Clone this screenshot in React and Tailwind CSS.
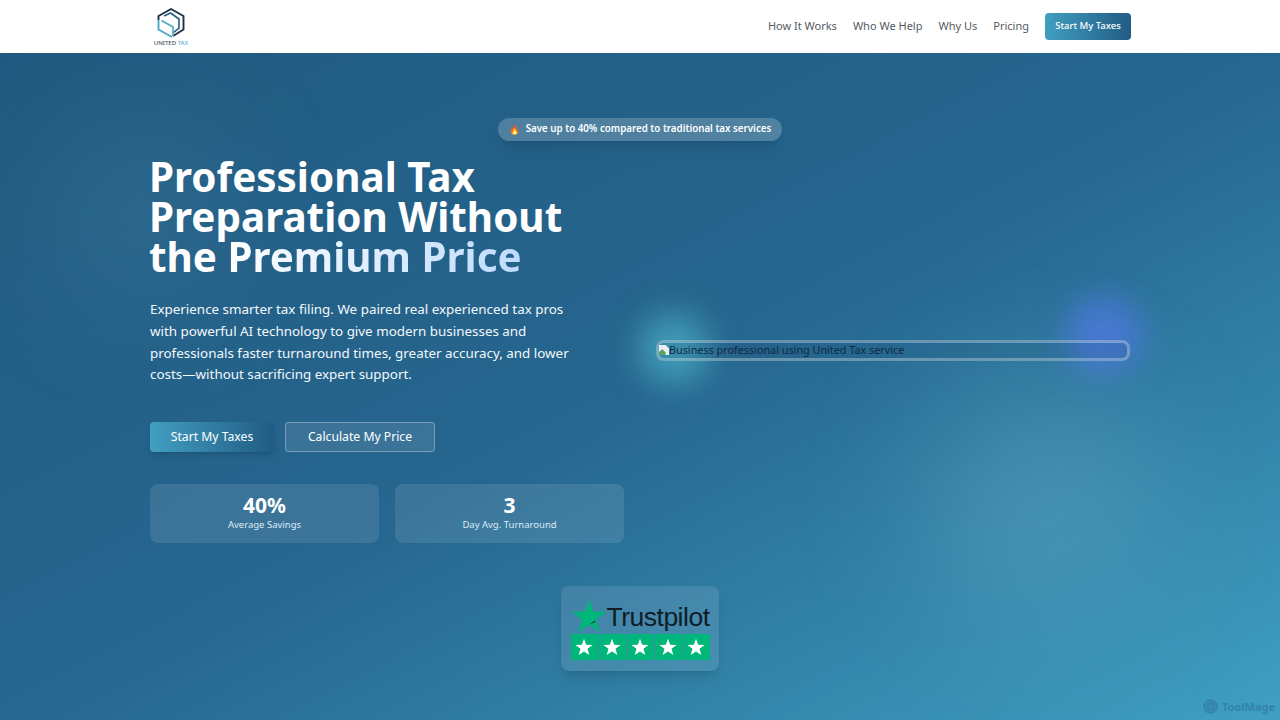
import React from 'react';

const font = "font-['Noto_Sans','Open_Sans',sans-serif]";

const Logo = () => (
    <div className="flex w-[36px] flex-col items-center pt-[2px]">
        <svg width="28" height="30" viewBox="0 0 28 30" fill="none">
            <path d="M1.5 12 V8 L14 1 L26.5 8 V21.5 L16 28" stroke="#1c3147" strokeWidth="1.9" strokeLinejoin="round" fill="none" />
            <path d="M1.5 12 V21.5 L15 29" stroke="#4aa8c8" strokeWidth="1.9" fill="none" />
            <path d="M7 8 L13.5 5 L22 11 V20 L16.5 24.5" stroke="#2c5d80" strokeWidth="1.6" fill="none" />
            <path d="M4.5 12.5 L16 19 V28" stroke="#4aa8c8" strokeWidth="1.6" fill="none" />
        </svg>
        <span className="mt-[1px] whitespace-nowrap text-[6px] leading-[8px] font-medium text-[#44505c]">
            UNITED <span className="text-[#5fb0cf]">TAX</span>
        </span>
    </div>
);

const Star = ({ size, color, notch }) => (
    <svg width={size} height={size} viewBox="0 0 24 24" className="shrink-0">
        <path d="M12 1 L14.9 9 L23.5 9.2 L16.7 14.4 L19.1 22.8 L12 17.9 L4.9 22.8 L7.3 14.4 L0.5 9.2 L9.1 9 Z" fill={color} />
        {notch && <path d="M12 17.9 L15.8 15 L16.4 16 Z" fill="#0b4a38" />}
    </svg>
);

const Stat = ({ value, label }) => (
    <div className="flex h-[59px] flex-col items-center justify-center rounded-lg bg-white/10 pb-[4px]">
        <div className="text-[21px] leading-[26px] font-bold text-white">{value}</div>
        <div className="text-[9.5px] leading-[14px] text-[#dcebf5]">{label}</div>
    </div>
);

const BrokenImage = () => (
    <svg width="10" height="12" viewBox="0 0 12 12" className="shrink-0">
        <path d="M0 0 H8 L12 4 V12 H0 Z" fill="#e8eef3" />
        <path d="M0 8 L4 5 L8 9 V12 H0 Z" fill="#5aa35a" />
    </svg>
);

export default function App() {
    return (
        <div className={`${font} flex h-[720px] flex-col overflow-hidden`}>
            <header className="flex h-[53px] items-center justify-between bg-white pr-[149px] pl-[153px]">
                <Logo />
                <nav className="flex items-center gap-4 text-[11px] text-[#555b61]">
                    <a>How It Works</a>
                    <a>Who We Help</a>
                    <a>Why Us</a>
                    <a>Pricing</a>
                    <a className="flex h-[27px] w-[86px] items-center justify-center rounded bg-gradient-to-r from-[#429fc0] to-[#215c85] text-[9.5px] font-medium text-white">
                        Start My Taxes
                    </a>
                </nav>
            </header>

            <main className="relative flex flex-1 flex-col items-center overflow-hidden bg-gradient-to-br from-[#215a80] via-[#26668f] to-[#3fa0c2] pt-[65px]">
                <div className="absolute top-[260px] left-[638px] h-[72px] w-[72px] rounded-full bg-[#4bb0c8]/70 blur-lg" />
                <div className="absolute top-[244px] left-[1066px] h-[76px] w-[76px] rounded-full bg-[#4a78d8]/90 blur-lg" />
                <div className="absolute top-[340px] left-[930px] h-[220px] w-[220px] rounded-full bg-[#7ab8cc]/30 blur-3xl" />
                <div className="absolute top-[80px] left-[60px] h-[160px] w-[160px] rounded-full bg-[#6aa0b8]/20 blur-3xl" />

                <div className="relative flex h-[23px] w-[284px] items-center justify-center gap-[6px] rounded-full bg-white/20 text-[9.75px] font-semibold text-white shadow-lg">
                    <span className="text-[9px]">🔥</span>
                    Save up to 40% compared to traditional tax services
                </div>

                <section className="relative mt-[16px] grid w-[980px] grid-cols-2 items-center gap-8">
                    <div className="flex flex-col">
                        <h1 className="-ml-[1px] text-[40.4px] leading-[40px] font-bold text-white">
                            Professional Tax Preparation Without the{' '}
                            <span className="bg-gradient-to-r from-white to-[#bfdbfe] bg-clip-text text-transparent">Premium Price</span>
                        </h1>
                        <p className="mt-[22px] max-w-[430px] text-[13.4px] leading-[21.8px] text-[#f3f8fb]">
                            Experience smarter tax filing. We paired real experienced tax pros with powerful AI technology to give modern businesses and professionals faster turnaround times, greater accuracy, and lower costs—without sacrificing expert support.
                        </p>
                        <div className="mt-[36px] flex gap-[11px] text-[12.2px] text-white">
                            <a className="flex h-[30px] w-[124px] items-center justify-center rounded bg-gradient-to-r from-[#429fc0] to-[#215c85] shadow-md">Start My Taxes</a>
                            <a className="flex h-[30px] w-[150px] items-center justify-center rounded border border-white/30 bg-white/10">Calculate My Price</a>
                        </div>
                        <div className="mt-[32px] grid grid-cols-2 gap-4">
                            <Stat value="40%" label="Average Savings" />
                            <Stat value="3" label="Day Avg. Turnaround" />
                        </div>
                    </div>
                    <div className="flex h-[21px] items-center rounded-lg border-[3px] border-white/30 bg-[#123f5f]/10 text-[10.8px] leading-none text-[#10293f]">
                        <BrokenImage />
                        Business professional using United Tax service
                    </div>
                </section>

                <div className="relative mt-[43px] flex h-[85px] w-[158px] flex-col items-center justify-center rounded-lg bg-white/10 pt-[1px] shadow-lg">
                    <div className="flex h-[36px] items-center font-['Liberation_Sans',sans-serif] text-[26.5px] leading-[32px] tracking-[-0.5px] text-[#101c26]">
                        <Star size={36} color="#00b67a" notch />
                        <span className="pt-[1px]">Trustpilot</span>
                    </div>
                    <div className="flex gap-[1px]">
                        {[0, 1, 2, 3, 4].map(i => (
                            <div key={i} className="flex h-[26px] w-[27px] items-center justify-center bg-[#00b67a]">
                                <Star size={18} color="#ffffff" />
                            </div>
                        ))}
                    </div>
                </div>

                <div className="absolute right-[5px] bottom-[5px] flex items-center gap-1 text-[11px] font-bold text-[#3384ab]">
                    <svg width="15" height="15" viewBox="0 0 16 16" fill="#3a8ab4" stroke="#3384ab" strokeWidth="1.5">
                        <circle cx="8" cy="8" r="7" />
                        <circle cx="8" cy="8" r="3.5" />
                    </svg>
                    ToolMage
                </div>
            </main>
        </div>
    );
}
